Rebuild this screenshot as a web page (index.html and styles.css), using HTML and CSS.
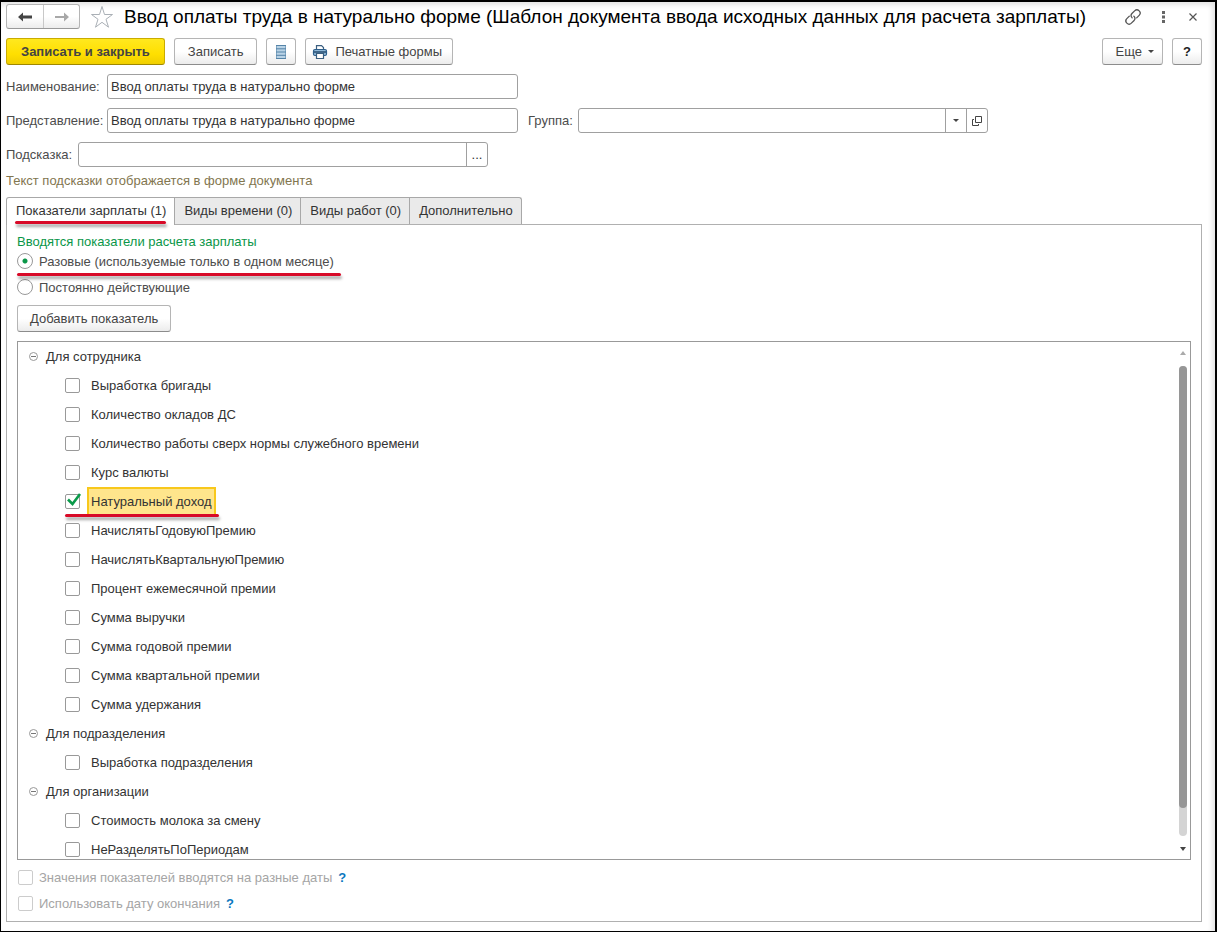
FILE: index.html
```html
<!DOCTYPE html>
<html lang="ru">
<head>
<meta charset="utf-8">
<meta name="viewport" content="width=device-width, initial-scale=1">
<title>Ввод оплаты труда в натурально форме</title>
<link rel="stylesheet" href="styles.css">
</head>
<body>
<main class="window">
  <header class="titlebar">
    <div class="nav">
      <button type="button" class="nav-btn" aria-label="Назад"><svg width="16" height="12" viewBox="0 0 16 12"><path d="M1 6l5-4.500v3h9v3H6v3z" fill="#444"/></svg></button>
      <button type="button" class="nav-btn" aria-label="Вперед"><svg width="16" height="12" viewBox="0 0 16 12"><path d="M15 6l-5-4.500v3.500H1v2h9v3.500z" fill="#a8a8a8"/></svg></button>
    </div>
    <button type="button" class="icon-btn star" aria-label="В избранное"><svg width="24" height="24" viewBox="0 0 24 24"><path d="M12 1.500l2.500 8h8l-6.500 4.800 2.500 7.900L12 17.300l-6.500 4.900L8 14.300 1.500 9.500h8z" fill="#fff" stroke="#aab0b6"/></svg></button>
    <h1 class="title">Ввод оплаты труда в натурально форме (Шаблон документа ввода исходных данных для расчета зарплаты)</h1>
    <div class="title-actions">
      <button type="button" class="icon-btn" aria-label="Ссылка"><svg width="18" height="18" viewBox="0 0 18 18"><g fill="none" stroke="#555" stroke-width="1.300" stroke-linecap="round" transform="rotate(-45 9 9)"><path d="M7 5.800H3.500a3.200 3.200 0 0 0 0 6.400H7a3.200 3.200 0 0 0 3.200-3.200"/><path d="M11 12.200h3.500a3.200 3.200 0 0 0 0-6.400H11A3.200 3.200 0 0 0 7.800 9"/></g></svg></button>
      <button type="button" class="icon-btn" aria-label="Меню"><svg width="18" height="18" viewBox="0 0 18 18"><path d="M8 3h3v3H8zM8 7.500h3v3H8zM8 12h3v3H8z" fill="#666"/></svg></button>
      <button type="button" class="icon-btn" aria-label="Закрыть"><svg width="18" height="18" viewBox="0 0 18 18"><path d="M5.500 5.500l7 7m0-7l-7 7" stroke="#555" stroke-width="1.200"/></svg></button>
    </div>
  </header>

  <div class="toolbar">
    <button type="button" class="btn btn-primary">Записать и закрыть</button>
    <button type="button" class="btn">Записать</button>
    <button type="button" class="btn btn-icon" aria-label="Список"><svg width="12" height="16" viewBox="0 0 12 16"><path d="M1.500 1.500h9v13h-9z" fill="#b9d3e6" stroke="#7fa5c2"/><path d="M1 1.500h10M1 4.800h10M1 8h10M1 11.300h10M1 14.500h10" stroke="#5584a8"/></svg></button>
    <button type="button" class="btn btn-print"><svg width="16" height="16" viewBox="0 0 16 16"><path d="M4.500 6V1.600h5l2 2V6" fill="#fff" stroke="#3b5f80" stroke-width="1.200"/><rect x="1.500" y="5.500" width="13" height="6" rx="1.500" fill="#8fb8d8" stroke="#2d5f8c" stroke-width="1.200"/><path d="M2 8h12" stroke="#2d5478" stroke-width="1.600"/><path d="M4.500 9.500h7v5h-7z" fill="#fff" stroke="#3b5f80" stroke-width="1.200"/></svg>Печатные формы</button>
    <span class="spacer"></span>
    <button type="button" class="btn btn-more">Еще<svg width="6" height="4" viewBox="0 0 6 4"><path d="M0 0h6L3 3z" fill="#444"/></svg></button>
    <button type="button" class="btn btn-help">?</button>
  </div>

  <form class="form">
    <div class="row">
      <label class="label label-wide" for="name">Наименование:</label>
      <input class="input" id="name" type="text" value="Ввод оплаты труда в натурально форме">
    </div>
    <div class="row">
      <label class="label label-wide" for="view">Представление:</label>
      <input class="input" id="view" type="text" value="Ввод оплаты труда в натурально форме">
      <label class="label label-group" for="group">Группа:</label>
      <div class="combo">
        <input class="combo-input" id="group" type="text">
        <button type="button" class="combo-btn" aria-label="Выбрать"><svg width="6" height="4" viewBox="0 0 6 4"><path d="M0 0h6L3 3z" fill="#444"/></svg></button>
        <button type="button" class="combo-btn" aria-label="Открыть"><svg width="10" height="10" viewBox="0 0 10 10"><path d="M3.500.5h6v6h-6zM2 3.500H.5v6h6V8" fill="none" stroke="#444"/></svg></button>
      </div>
    </div>
    <div class="row">
      <label class="label label-hint" for="hint">Подсказка:</label>
      <div class="combo">
        <input class="combo-input" id="hint" type="text">
        <button type="button" class="combo-btn" aria-label="Изменить">...</button>
      </div>
    </div>
    <p class="note">Текст подсказки отображается в форме документа</p>
  </form>

  <div class="tabs" role="tablist">
    <button type="button" role="tab" aria-selected="true" class="tab tab-active"><span class="marked mark-tab">Показатели зарплаты (1)</span></button>
    <button type="button" role="tab" aria-selected="false" class="tab">Виды времени (0)</button>
    <button type="button" role="tab" aria-selected="false" class="tab">Виды работ (0)</button>
    <button type="button" role="tab" aria-selected="false" class="tab">Дополнительно</button>
  </div>

  <section class="panel">
    <fieldset class="radios">
      <legend class="legend">Вводятся показатели расчета зарплаты</legend>
      <label class="radio marked mark-radio"><input type="radio" name="kind" checked>Разовые (используемые только в одном месяце)</label>
      <label class="radio"><input type="radio" name="kind">Постоянно действующие</label>
    </fieldset>
    <button type="button" class="btn btn-add">Добавить показатель</button>

    <div class="list">
      <div class="tree">
        <div class="group"><button type="button" class="toggle" aria-label="Свернуть"></button>Для сотрудника</div>
        <label class="item"><input type="checkbox"><span class="item-text">Выработка бригады</span></label>
        <label class="item"><input type="checkbox"><span class="item-text">Количество окладов ДС</span></label>
        <label class="item"><input type="checkbox"><span class="item-text">Количество работы сверх нормы служебного времени</span></label>
        <label class="item"><input type="checkbox"><span class="item-text">Курс валюты</span></label>
        <label class="item marked mark-item"><input type="checkbox" checked><span class="item-text item-selected">Натуральный доход</span><svg class="tick" width="16" height="16" viewBox="0 0 16 16"><path d="M2 7.500l4.500 4.500L14 2" fill="none" stroke="#0a9a4a" stroke-width="2.600"/></svg></label>
        <label class="item"><input type="checkbox"><span class="item-text">НачислятьГодовуюПремию</span></label>
        <label class="item"><input type="checkbox"><span class="item-text">НачислятьКвартальнуюПремию</span></label>
        <label class="item"><input type="checkbox"><span class="item-text">Процент ежемесячной премии</span></label>
        <label class="item"><input type="checkbox"><span class="item-text">Сумма выручки</span></label>
        <label class="item"><input type="checkbox"><span class="item-text">Сумма годовой премии</span></label>
        <label class="item"><input type="checkbox"><span class="item-text">Сумма квартальной премии</span></label>
        <label class="item"><input type="checkbox"><span class="item-text">Сумма удержания</span></label>
        <div class="group"><button type="button" class="toggle" aria-label="Свернуть"></button>Для подразделения</div>
        <label class="item"><input type="checkbox"><span class="item-text">Выработка подразделения</span></label>
        <div class="group"><button type="button" class="toggle" aria-label="Свернуть"></button>Для организации</div>
        <label class="item"><input type="checkbox"><span class="item-text">Стоимость молока за смену</span></label>
        <label class="item"><input type="checkbox"><span class="item-text">НеРазделятьПоПериодам</span></label>
      </div>
      <div class="scroll">
        <svg width="6" height="4" viewBox="0 0 6 4"><path d="M0 4h6L3 0z" fill="#aaa"/></svg>
        <div class="scroll-track"><div class="scroll-thumb"></div></div>
        <svg width="6" height="4" viewBox="0 0 6 4"><path d="M0 0h6L3 4z" fill="#444"/></svg>
      </div>
    </div>

    <div class="options">
      <div class="option"><label class="option-label"><input type="checkbox" disabled>Значения показателей вводятся на разные даты</label><a class="help" href="#">?</a></div>
      <div class="option"><label class="option-label"><input type="checkbox" disabled>Использовать дату окончания</label><a class="help" href="#">?</a></div>
    </div>
  </section>
</main>
</body>
</html>
```

FILE: styles.css
```css
* { box-sizing: border-box; }

body {
  margin: 0;
  background: #fff;
  color: #333;
  font: 13px/15px "Liberation Sans", Arial, sans-serif;
}

button, input {
  margin: 0;
  font: inherit;
  color: inherit;
}

svg { display: block; flex: none; }

.window {
  display: flex;
  flex-direction: column;
  height: 100vh;
  min-height: 600px;
  padding: 2px 13px 9px 5px;
  border: 1px solid #000;
  border-right-width: 2px;
  border-top-width: 2px;
  box-shadow: inset -3px 3px 5px #e4e4e4;
}

/* Title bar */
.titlebar {
  display: flex;
  align-items: center;
  height: 25px;
}

.nav {
  display: flex;
  height: 25px;
  border: 1px solid #b5b5b5;
  border-bottom-color: #999;
  border-radius: 3px;
  background: linear-gradient(#fff 50%, #ececec);
}

.nav-btn {
  display: flex;
  align-items: center;
  justify-content: center;
  width: 36px;
  padding: 0;
  border: 0;
  background: none;
}

.nav-btn + .nav-btn { border-left: 1px solid #c8c8c8; }

.icon-btn {
  display: flex;
  padding: 0;
  border: 0;
  background: none;
}

.star { margin: 0 10px; }

.title {
  flex: 1;
  margin: 0;
  overflow: hidden;
  color: #000;
  font-size: 19px;
  line-height: 24px;
  font-weight: 400;
  white-space: nowrap;
}

.title-actions {
  display: flex;
  gap: 12px;
}

/* Toolbar */
.toolbar {
  display: flex;
  gap: 9px;
  margin: 9px 0;
}

.btn {
  display: flex;
  align-items: center;
  justify-content: center;
  height: 27px;
  padding: 0 13px;
  border: 1px solid #b5b5b5;
  border-bottom-color: #8c8c8c;
  border-radius: 3px;
  background: linear-gradient(#fff 50%, #ececec);
  color: #444;
  white-space: nowrap;
}

.btn-primary {
  padding: 0 14px;
  border-color: #c9ab00;
  border-bottom-color: #a08800;
  background: linear-gradient(#ffe81f, #ffdf00 60%, #f0cf00);
  font-weight: 700;
}

.btn-icon { width: 30px; padding: 0; }
.btn-print { gap: 7px; padding: 0 10px 0 6px; }
.btn-more { gap: 6px; padding: 0 8px 0 13px; }
.btn-help { width: 30px; padding: 0; color: #222; font-weight: 700; }
.spacer { flex: 1; }

/* Form fields */
.form {
  display: flex;
  flex-direction: column;
  gap: 9px;
}

.row {
  display: flex;
  align-items: center;
}

.label { flex: none; color: #4c4c4c; }
.label-wide { width: 101px; }
.label-hint { width: 72px; }
.label-group { width: 60px; padding-left: 10px; }

.input,
.combo {
  flex: 0 1 411px;
  min-width: 0;
  height: 25px;
  border: 1px solid #a0a0a0;
  border-radius: 3px;
  background: #fff;
}

.input { padding: 0 3px; }

.combo { display: flex; flex-basis: 410px; }

.combo-input {
  flex: 1;
  min-width: 0;
  padding: 0 3px;
  border: 0;
  background: none;
}

.combo-btn {
  display: flex;
  align-items: center;
  justify-content: center;
  width: 21px;
  padding: 0;
  border: 0;
  border-left: 1px solid #a0a0a0;
  background: none;
}

.note {
  margin: -3px 0 0;
  color: #82764f;
}

/* Tabs */
.tabs {
  display: flex;
  position: relative;
  margin-top: 9px;
}

.tab {
  height: 27px;
  padding: 0 8px 1px 9px;
  border: 1px solid #a8a8a8;
  border-width: 1px 1px 0 0;
  background: #eaeaea;
}

.tab:first-child { border-left-width: 1px; border-radius: 3px 0 0 0; }
.tab:last-child { border-radius: 0 3px 0 0; }

.tab-active {
  height: 28px;
  margin-bottom: -1px;
  padding-bottom: 2px;
  background: #fff;
}

.panel {
  display: flex;
  flex: 1;
  flex-direction: column;
  min-height: 0;
  padding: 9px 10px 10px;
  border: 1px solid #b0b0b0;
}

/* Red pen strokes under the highlighted parts */
.marked { position: relative; }

.marked::after {
  content: "";
  position: absolute;
  height: 3px;
  border-radius: 2px;
  background: #d80a28;
  box-shadow: 1px 3px 3px rgba(0, 0, 0, 0.35);
}

.mark-tab::after { left: -1px; right: 0; bottom: -6px; }
.mark-radio::after { left: 0; right: -7px; bottom: -7px; }
.mark-item::after { left: 47px; right: -3px; bottom: -1px; z-index: 1; }

/* Radio buttons and check boxes */
.radios {
  display: flex;
  flex-direction: column;
  align-items: flex-start;
  margin: 0;
  padding: 0;
  border: 0;
}

.legend { padding: 0; color: #0a9648; }

.radio {
  display: flex;
  align-items: center;
  gap: 6px;
  height: 16px;
  margin-top: 4px;
  color: #4c4c4c;
}

.radio + .radio { margin-top: 10px; }

input[type="radio"],
input[type="checkbox"] {
  flex: none;
  width: 15px;
  height: 15px;
  border: 1px solid #999;
  background: #fff;
  appearance: none;
}

input[type="radio"] { width: 16px; height: 16px; border-radius: 50%; }
input[type="radio"]:checked { background: radial-gradient(circle, #0a9648 2px, #fff 3px); }
input[type="checkbox"] { border-radius: 2px; }
input[type="checkbox"]:disabled { border-color: #ccc; }

.btn-add { align-self: flex-start; margin: 10px 0 9px; padding: 0 12px; }

/* Indicator tree */
.list {
  display: flex;
  flex: 1;
  min-height: 0;
  border: 1px solid #999;
}

.tree {
  display: flex;
  flex: 1;
  flex-direction: column;
  align-items: flex-start;
  overflow: hidden;
}

.group,
.item {
  display: flex;
  flex: none;
  align-items: center;
  height: 29px;
}

.group { gap: 8px; padding-left: 11px; }
.item { gap: 7px; padding-left: 47px; }

.toggle {
  display: flex;
  align-items: center;
  justify-content: center;
  width: 9px;
  height: 9px;
  padding: 0;
  border: 1px solid #999;
  border-radius: 50%;
  background: none;
}

.toggle::before {
  content: "";
  width: 5px;
  height: 1px;
  background: #777;
}

.item-text { padding: 6px 3px; border: 1px solid transparent; }

.item-selected {
  border: 2px solid #f8c81c;
  background: #ffe58c;
  padding: 5px 2px;
}

.tick { position: absolute; left: 48px; top: 5px; }

.scroll {
  display: flex;
  flex-direction: column;
  align-items: center;
  gap: 11px;
  width: 14px;
  padding: 9px 0 8px;
}

.scroll-track {
  flex: 1;
  width: 8px;
  border-radius: 4px;
  background: #d4d4d4;
}

.scroll-thumb {
  height: 94%;
  border-radius: 4px;
  background: #969696;
}

.options {
  display: flex;
  flex-direction: column;
  gap: 11px;
  padding-top: 10px;
}

.option,
.option-label {
  display: flex;
  align-items: center;
  gap: 6px;
}

.option-label { color: #a5a5a5; padding-left: 1px; }

.help {
  color: #0a78c0;
  font-weight: 700;
  text-decoration: none;
}
```
